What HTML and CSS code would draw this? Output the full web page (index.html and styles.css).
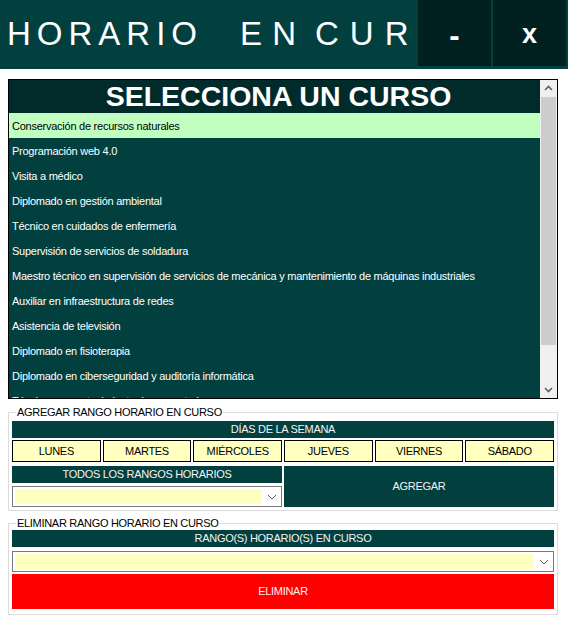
FILE: index.html
```html
<!DOCTYPE html>
<html lang="es">
<head>
<meta charset="utf-8">
<title>Horario en curso</title>
<link rel="stylesheet" href="styles.css">
</head>
<body>
<div class="app">
  <header class="titlebar">
    <div class="title">
      <span class="tw tw-1">HORARIO</span>
      <span class="tw tw-2">EN</span>
      <span class="tw tw-3">CURSO</span>
    </div>
    <div class="winbtn winbtn-min">-</div>
    <div class="winbtn winbtn-close">x</div>
  </header>
  <main class="content">
    <div class="listbox">
      <div class="list">
        <div class="list-head">SELECCIONA UN CURSO</div>
        <div class="item selected">Conservación de recursos naturales</div>
        <div class="item">Programación web 4.0</div>
        <div class="item">Visita a médico</div>
        <div class="item">Diplomado en gestión ambiental</div>
        <div class="item">Técnico en cuidados de enfermería</div>
        <div class="item">Supervisión de servicios de soldadura</div>
        <div class="item">Maestro técnico en supervisión de servicios de mecánica y mantenimiento de máquinas industriales</div>
        <div class="item">Auxiliar en infraestructura de redes</div>
        <div class="item">Asistencia de televisión</div>
        <div class="item">Diplomado en fisioterapia</div>
        <div class="item">Diplomado en ciberseguridad y auditoría informática</div>
        <div class="item">Técnico en mantenimiento de computadoras</div>
      </div>
      <div class="scrollbar">
        <div class="sb-arrow">
          <svg width="17" height="17" viewBox="0 0 17 17"><path d="M5 10 L8.5 6.5 L12 10" fill="none" stroke="#606060" stroke-width="1.6"/></svg>
        </div>
        <div class="sb-track"><div class="sb-thumb"></div></div>
        <div class="sb-arrow">
          <svg width="17" height="17" viewBox="0 0 17 17"><path d="M5 7 L8.5 10.5 L12 7" fill="none" stroke="#606060" stroke-width="1.6"/></svg>
        </div>
      </div>
    </div>

    <fieldset class="group group-add">
      <legend>AGREGAR RANGO HORARIO EN CURSO</legend>
      <div class="bar">DÍAS DE LA SEMANA</div>
      <div class="days">
        <div class="day">LUNES</div>
        <div class="day">MARTES</div>
        <div class="day">MIÉRCOLES</div>
        <div class="day">JUEVES</div>
        <div class="day">VIERNES</div>
        <div class="day">SÁBADO</div>
      </div>
      <div class="add-row">
        <div class="add-left">
          <div class="bar">TODOS LOS RANGOS HORARIOS</div>
          <div class="combo">
            <div class="combo-field"></div>
            <div class="combo-btn"><svg width="17" height="15" viewBox="0 0 17 15"><path d="M6 6 L10 10 L14 6" fill="none" stroke="#5a5a5a" stroke-width="1"/></svg></div>
          </div>
        </div>
        <div class="btn-add">AGREGAR</div>
      </div>
    </fieldset>

    <fieldset class="group group-del">
      <legend>ELIMINAR RANGO HORARIO EN CURSO</legend>
      <div class="bar">RANGO(S) HORARIO(S) EN CURSO</div>
      <div class="combo combo-del">
        <div class="combo-field"></div>
        <div class="combo-btn"><svg width="17" height="15" viewBox="0 0 17 15"><path d="M6 6 L10 10 L14 6" fill="none" stroke="#5a5a5a" stroke-width="1"/></svg></div>
      </div>
      <div class="btn-del">ELIMINAR</div>
    </fieldset>
  </main>
</div>
</body>
</html>
```

FILE: styles.css
```css
html, body {
  margin: 0;
  padding: 0;
  background: #ffffff;
}

body {
  font-family: "Liberation Sans", Arial, sans-serif;
  font-size: 11px;
  color: #000;
}

.app {
  width: 568px;
}

/* ---------- title bar ---------- */
.titlebar {
  display: flex;
  align-items: flex-start;
  height: 69px;
  background: #023f3f;
}

.title {
  flex: 1;
  min-width: 0;
  display: flex;
  height: 69px;
  box-sizing: border-box;
  padding: 17px 0 0 7px;
  overflow: hidden;
  white-space: nowrap;
  color: #ffffff;
  font-size: 33px;
  line-height: 33px;
}

.tw {
  flex: none;
}

.tw-1 {
  letter-spacing: 6px;
  margin-right: 37px;
}

.tw-2 {
  letter-spacing: 10.3px;
  margin-right: 8.5px;
}

.tw-3 {
  letter-spacing: 11px;
}

.winbtn {
  width: 73px;
  height: 66px;
  box-sizing: border-box;
  padding-top: 3px;
  background: #012121;
  color: #ffffff;
  font-size: 27px;
  font-weight: bold;
  line-height: 63px;
  text-align: center;
}

.winbtn-min {
  padding-top: 6px;
  font-size: 31px;
  line-height: 60px;
}

.winbtn-close {
  margin-left: 2px;
  margin-right: 2px;
}

/* ---------- content ---------- */
.content {
  padding: 10px 0 0 8px;
  width: 550px;
}

/* ---------- list box ---------- */
.listbox {
  display: flex;
  width: 550px;
  height: 320px;
  box-sizing: border-box;
  border: 1px solid #000;
}

.list {
  flex: 1;
  min-width: 0;
  overflow: hidden;
  background: #023f3f;
}

.list-head {
  height: 33px;
  background: #012b2b;
  color: #ffffff;
  font-size: 28.5px;
  font-weight: bold;
  line-height: 33px;
  text-align: center;
  padding-left: 8px;
  white-space: nowrap;
}

.item {
  height: 25px;
  box-sizing: border-box;
  padding: 2px 0 0 3px;
  line-height: 23px;
  color: #ffffff;
  font-size: 11px;
  letter-spacing: -0.25px;
  white-space: nowrap;
}

.item.selected {
  background: #c0ffc0;
  color: #000;
}

.scrollbar {
  width: 17px;
  display: flex;
  flex-direction: column;
  background: #f0f0f0;
}

.sb-arrow {
  height: 17px;
  display: flex;
}

.sb-track {
  flex: 1;
  padding: 0 1px;
}

.sb-thumb {
  height: 248px;
  background: #cdcdcd;
}

/* ---------- group boxes ---------- */
.group {
  margin: 7px 0 0 0;
  padding: 0 3px 3px 3px;
  border: 1px solid #dcdcdc;
  min-width: 0;
  width: 550px;
  box-sizing: border-box;
}

.group legend {
  margin-left: 4px;
  padding: 0 1px;
  font-size: 11px;
  line-height: 13px;
  letter-spacing: -0.3px;
  color: #000;
}

.group-del {
  margin-top: 6px;
  padding-bottom: 5px;
}

.bar {
  height: 17px;
  margin-top: 2px;
  background: #023f3f;
  color: #f4f4f4;
  text-align: center;
  line-height: 17px;
  letter-spacing: -0.3px;
  white-space: nowrap;
}

.group-del .bar {
  margin-top: 0;
}

.days {
  display: grid;
  grid-template-columns: repeat(6, 1fr);
  column-gap: 2px;
  margin-top: 2px;
}

.day {
  height: 22px;
  box-sizing: border-box;
  border: 1px solid #000;
  background: #ffffc0;
  text-align: center;
  line-height: 20px;
  letter-spacing: -0.3px;
  color: #000;
}

.add-row {
  display: grid;
  grid-template-columns: 1fr 1fr;
  column-gap: 2px;
  margin-top: 4px;
}

.add-left .bar {
  margin-top: 0;
}

.combo {
  display: flex;
  height: 21px;
  box-sizing: border-box;
  margin-top: 3px;
  border: 1px solid #7a7a7a;
  background: #ffffff;
  padding: 2px;
}

.combo-field {
  flex: 1;
  background: #ffffc0;
}

.combo-btn {
  width: 17px;
  display: flex;
  align-items: center;
}

.combo-del {
  margin-top: 4px;
}

.btn-add {
  height: 41px;
  background: #023f3f;
  color: #f4f4f4;
  text-align: center;
  line-height: 41px;
  letter-spacing: -0.3px;
}

.btn-del {
  height: 35px;
  margin-top: 2px;
  background: #ff0000;
  color: #f4f4f4;
  text-align: center;
  line-height: 35px;
  letter-spacing: -0.3px;
}
```
